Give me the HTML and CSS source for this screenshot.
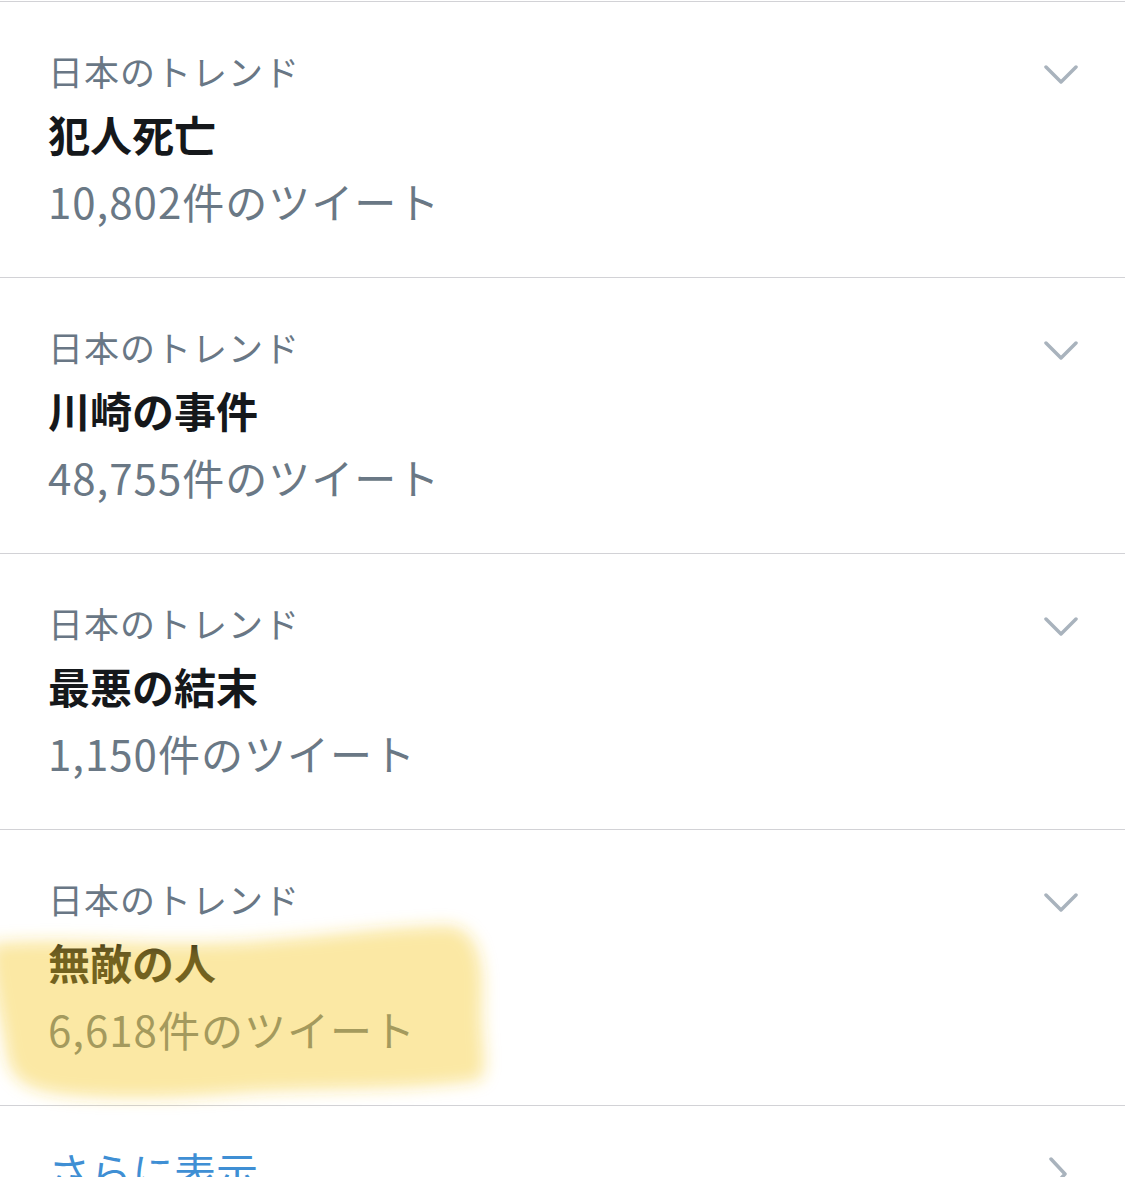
FILE: index.html
```html
<!DOCTYPE html>
<html lang="ja">
<head>
<meta charset="utf-8">
<title>日本のトレンド</title>
<link rel="stylesheet" href="styles.css">
</head>
<body>
<div class="page">
  <ul class="trends">
    <li class="trend">
      <div class="trend-text">
        <div class="trend-label">日本のトレンド</div>
        <div class="trend-title">犯人死亡</div>
        <div class="trend-count">10,802件のツイート</div>
      </div>
      <svg class="chev-down" viewBox="0 0 34 20" width="34" height="20"><polyline points="2,2 17,17 32,2"/></svg>
    </li>
    <li class="trend">
      <div class="trend-text">
        <div class="trend-label">日本のトレンド</div>
        <div class="trend-title">川崎の事件</div>
        <div class="trend-count">48,755件のツイート</div>
      </div>
      <svg class="chev-down" viewBox="0 0 34 20" width="34" height="20"><polyline points="2,2 17,17 32,2"/></svg>
    </li>
    <li class="trend">
      <div class="trend-text">
        <div class="trend-label">日本のトレンド</div>
        <div class="trend-title">最悪の結末</div>
        <div class="trend-count">1,150件のツイート</div>
      </div>
      <svg class="chev-down" viewBox="0 0 34 20" width="34" height="20"><polyline points="2,2 17,17 32,2"/></svg>
    </li>
    <li class="trend">
      <div class="trend-text">
        <div class="trend-label">日本のトレンド</div>
        <div class="trend-title">無敵の人</div>
        <div class="trend-count">6,618件のツイート</div>
      </div>
      <svg class="chev-down" viewBox="0 0 34 20" width="34" height="20"><polyline points="2,2 17,17 32,2"/></svg>
    </li>
    <li class="more">
      <span class="more-text">さらに表示</span>
      <svg class="chev-right" viewBox="0 0 20 34" width="20" height="34"><polyline points="3,2 17,17 3,32"/></svg>
    </li>
  </ul>
  <svg class="marker" viewBox="-20 900 540 220" width="540" height="220" aria-hidden="true">
    <defs>
      <filter id="soft" x="-10%" y="-20%" width="120%" height="140%">
        <feGaussianBlur stdDeviation="8"/>
      </filter>
    </defs>
    <path filter="url(#soft)" fill="#f5c825" fill-opacity="0.42" d="M-10,944 C60,936 150,948 250,942 C330,936 400,926 450,926 C478,930 484,962 482,1000 C480,1040 490,1068 480,1080 C420,1090 330,1088 250,1092 C180,1098 120,1100 60,1094 C20,1088 10,1076 6,1052 C0,1010 -10,980 -10,944 Z"/>
  </svg>
</div>
</body>
</html>
```

FILE: styles.css
```css
html, body {
  margin: 0;
  padding: 0;
  background: #ffffff;
  overflow: hidden;
}

.page {
  position: relative;
  width: 1125px;
  height: 1177px;
  overflow: hidden;
  font-family: "Noto Sans CJK JP", "Noto Sans", sans-serif;
}

.trends {
  list-style: none;
  margin: 1px 0 0 0;
  padding: 0;
}

.trend {
  display: flex;
  justify-content: space-between;
  align-items: flex-start;
  height: 275px;
  border-top: 1px solid #d2d2d6;
  padding: 0 47px 0 48px;
}

.trend-text {
  display: flex;
  flex-direction: column;
  padding-top: 38px;
}

.trend-label {
  font-size: 35px;
  line-height: 62px;
  color: #697785;
  letter-spacing: 1px;
}

.trend-title {
  font-size: 42px;
  line-height: 64px;
  font-weight: 700;
  color: #15181b;
}

.trend-count {
  font-size: 42px;
  line-height: 70px;
  color: #6a7885;
  letter-spacing: 1px;
}

.chev-down {
  margin-top: 63px;
  fill: none;
  stroke: #a9b3bd;
  stroke-width: 3.5;
  stroke-linecap: round;
  stroke-linejoin: round;
}

.more {
  display: flex;
  justify-content: space-between;
  align-items: flex-start;
  border-top: 1px solid #d2d2d6;
  padding: 33px 57px 0 48px;
  height: 80px;
}

.more-text {
  font-size: 42px;
  line-height: 64px;
  color: #3f8fd4;
}

.chev-right {
  margin-top: 18px;
  fill: none;
  stroke: #a9b3bd;
  stroke-width: 3.5;
  stroke-linecap: round;
  stroke-linejoin: round;
}

.marker {
  position: absolute;
  left: -20px;
  top: 900px;
  pointer-events: none;
}
```
